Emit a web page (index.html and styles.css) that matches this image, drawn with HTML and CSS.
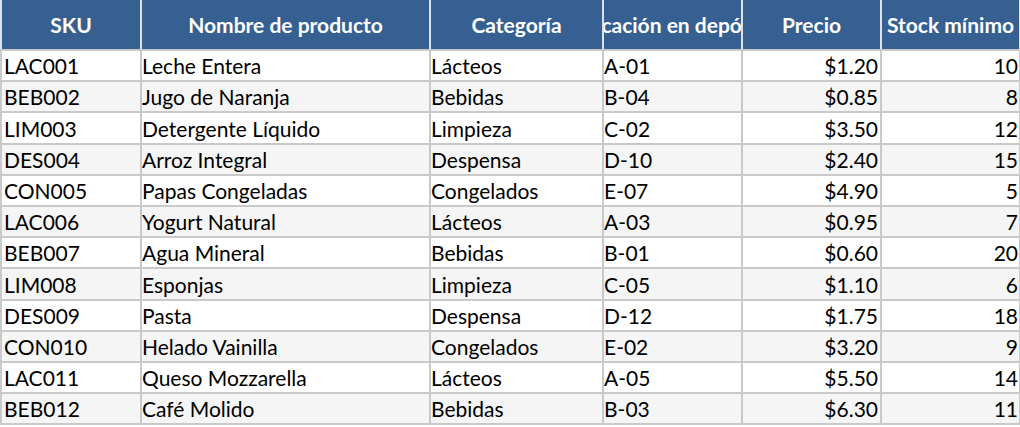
FILE: index.html
```html
<!DOCTYPE html>
<html lang="es">
<head>
<meta charset="utf-8">
<title>Inventario</title>
<link rel="stylesheet" href="styles.css">
</head>
<body>
<table class="sheet">
  <colgroup>
    <col class="c-sku"><col class="c-name"><col class="c-cat"><col class="c-loc"><col class="c-price"><col class="c-stock">
  </colgroup>
  <thead>
    <tr>
      <th><div class="hd">SKU</div></th>
      <th><div class="hd">Nombre de producto</div></th>
      <th><div class="hd">Categoría</div></th>
      <th><div class="hd">Ubicación en depósito</div></th>
      <th><div class="hd">Precio</div></th>
      <th><div class="hd">Stock mínimo</div></th>
    </tr>
  </thead>
  <tbody>
    <tr><td>LAC001</td><td>Leche Entera</td><td>Lácteos</td><td>A-01</td><td class="num">$1.20</td><td class="num">10</td></tr>
    <tr><td>BEB002</td><td>Jugo de Naranja</td><td>Bebidas</td><td>B-04</td><td class="num">$0.85</td><td class="num">8</td></tr>
    <tr><td>LIM003</td><td>Detergente Líquido</td><td>Limpieza</td><td>C-02</td><td class="num">$3.50</td><td class="num">12</td></tr>
    <tr><td>DES004</td><td>Arroz Integral</td><td>Despensa</td><td>D-10</td><td class="num">$2.40</td><td class="num">15</td></tr>
    <tr><td>CON005</td><td>Papas Congeladas</td><td>Congelados</td><td>E-07</td><td class="num">$4.90</td><td class="num">5</td></tr>
    <tr><td>LAC006</td><td>Yogurt Natural</td><td>Lácteos</td><td>A-03</td><td class="num">$0.95</td><td class="num">7</td></tr>
    <tr><td>BEB007</td><td>Agua Mineral</td><td>Bebidas</td><td>B-01</td><td class="num">$0.60</td><td class="num">20</td></tr>
    <tr><td>LIM008</td><td>Esponjas</td><td>Limpieza</td><td>C-05</td><td class="num">$1.10</td><td class="num">6</td></tr>
    <tr><td>DES009</td><td>Pasta</td><td>Despensa</td><td>D-12</td><td class="num">$1.75</td><td class="num">18</td></tr>
    <tr><td>CON010</td><td>Helado Vainilla</td><td>Congelados</td><td>E-02</td><td class="num">$3.20</td><td class="num">9</td></tr>
    <tr><td>LAC011</td><td>Queso Mozzarella</td><td>Lácteos</td><td>A-05</td><td class="num">$5.50</td><td class="num">14</td></tr>
    <tr><td>BEB012</td><td>Café Molido</td><td>Bebidas</td><td>B-03</td><td class="num">$6.30</td><td class="num">11</td></tr>
  </tbody>
</table>
</body>
</html>
```
FILE: styles.css
```css
html, body {
  margin: 0;
  padding: 0;
  background: #ffffff;
}

body {
  font-family: Lato, "Liberation Sans", sans-serif;
  font-size: 21px;
  color: #000000;
}

.sheet {
  border-collapse: collapse;
  table-layout: fixed;
  width: 1019px;
}

.c-sku { width: 140px; }
.c-name { width: 289px; }
.c-cat { width: 173px; }
.c-loc { width: 139px; }
.c-price { width: 139px; }
.c-stock { width: 139px; }

.sheet th {
  background: #366092;
  color: #ffffff;
  font-weight: bold;
  font-size: 21px;
  height: 49px;
  padding: 0;
  border-left: 2px solid #dde3ea;
  border-right: 2px solid #dde3ea;
  border-bottom: 2px solid #c9c9c9;
  overflow: hidden;
}

.hd {
  display: flex;
  justify-content: center;
  align-items: center;
  white-space: nowrap;
  overflow: hidden;
  height: 49px;
}

.sheet td {
  height: 29.2px;
  padding: 0 2px 0 0;
  border: 2px solid #c9c9c9;
  white-space: nowrap;
  overflow: hidden;
  vertical-align: bottom;
  line-height: 28px;
}

.sheet td:first-child {
  padding-left: 2px;
}

.sheet tbody tr:nth-child(even) td {
  background: #f5f5f5;
}

.sheet td.num {
  text-align: right;
}

.sheet td.num:last-child {
  padding-right: 1px;
}
```
